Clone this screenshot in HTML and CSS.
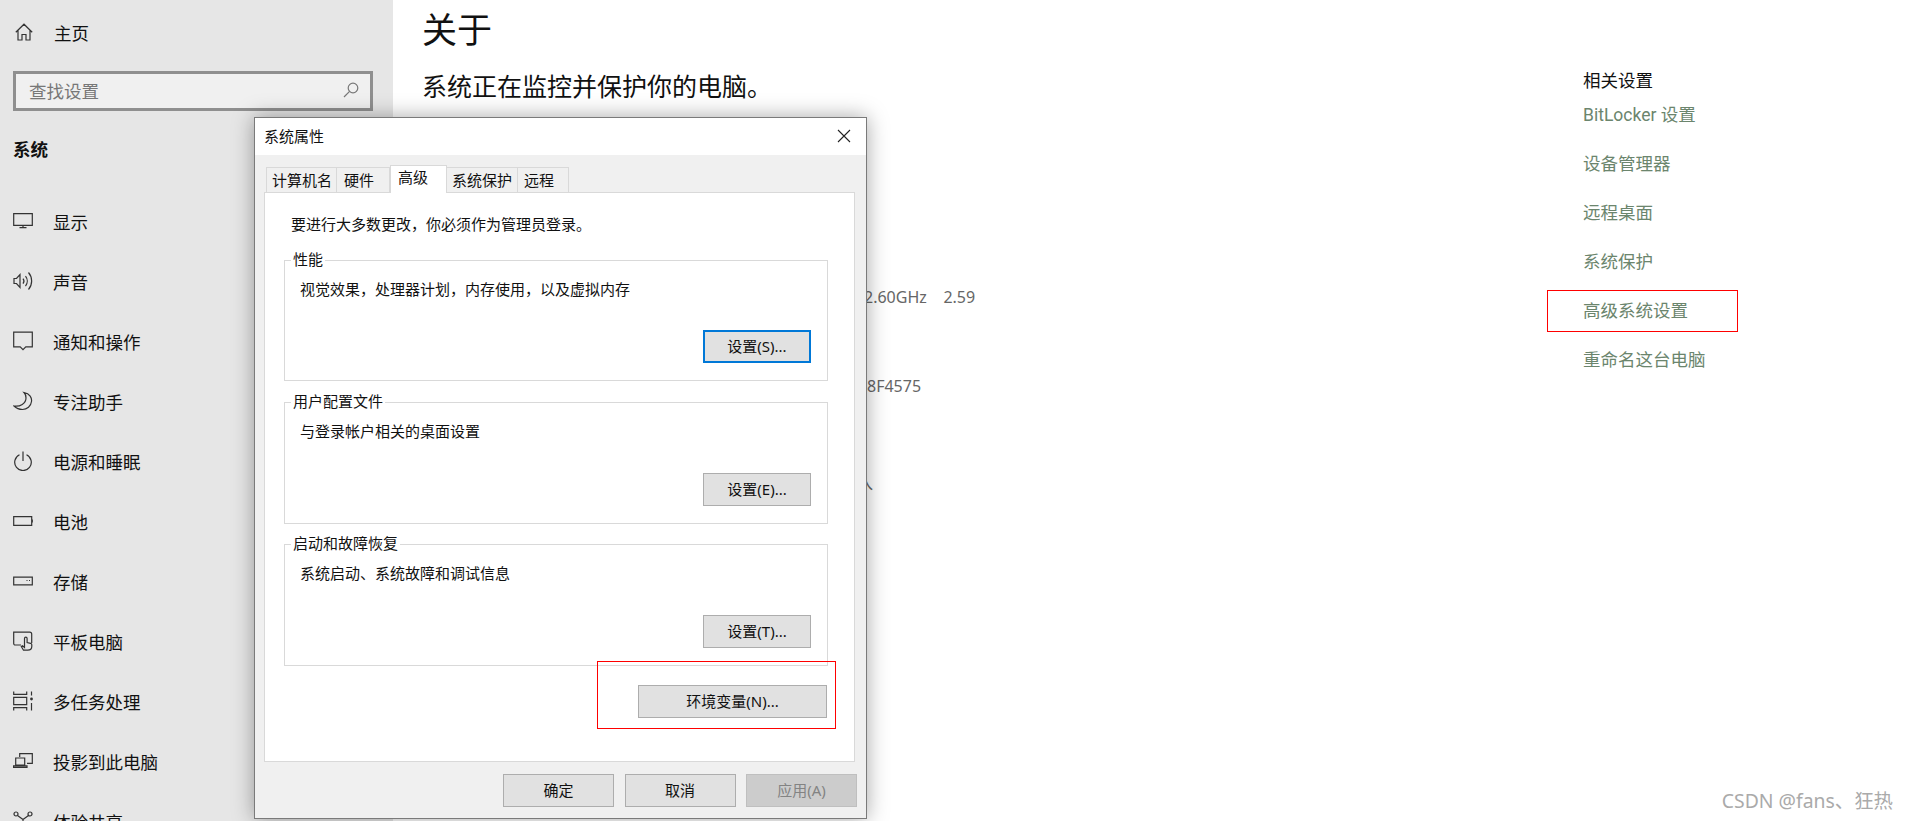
FILE: index.html
```html
<!DOCTYPE html>
<html lang="zh-CN">
<head>
    <meta charset="UTF-8">
    <title>关于</title>
    <link rel="stylesheet" href="styles.css">
</head>
<body>
    <div class="sidebar">
        <div class="home-row">
            <svg class="home-icon" viewBox="0 0 18 18"><path d="M.8 9.2 9 1.2l8.2 8M3 7.2V17h4v-5.5h4V17h4V7.2"/></svg>
            <span>主页</span>
        </div>
        <div class="search">
            <span>查找设置</span>
            <svg class="search-icon" viewBox="0 0 16 16"><circle cx="10" cy="6" r="4.8"/><path d="M6.6 9.4 1 15"/></svg>
        </div>
        <div class="sidebar-title">系统</div>
        <ul class="nav">
            <li><svg viewBox="0 0 20 20"><path d="M.7 2.700h18.600v11.600H.7zM10 14.300v2.400M6.500 16.700h7"/></svg>显示</li>
            <li><svg viewBox="0 0 20 20"><path d="M1 7.500h2.500l3.500-4v13l-3.500-4H1zM10 7.500a4 4 0 0 1 0 5M12.500 5a8 8 0 0 1 0 10M15.500 1.500a13 13 0 0 1 0 17"/></svg>声音</li>
            <li><svg viewBox="0 0 20 20"><path d="M.7 1.200h18.600v14.600h-6.500L10 18.600l-2.800-2.800H.7z"/></svg>通知和操作</li>
            <li><svg viewBox="0 0 20 20"><path d="M11 1.500c6 1 8 5.500 7.500 9-.5 4.500-4.500 8-9 8-3.500 0-6.500-1.500-8.500-3.500 6 1 12-2.500 12-8 0-2-.5-4-2-5.500z"/></svg>专注助手</li>
            <li><svg viewBox="0 0 20 20"><path d="M6.500 3.700a8.300 8.300 0 1 0 7 0M10 .5v9.500"/></svg>电源和睡眠</li>
            <li><svg viewBox="0 0 20 20"><path d="M.7 5.700h18v8.600H.7zM19.300 8.500v3"/></svg>电池</li>
            <li><svg viewBox="0 0 20 20"><path d="M.7 6.200h18.600v7.600H.7zM13.500 9.500h1M16 9.500h1"/></svg>存储</li>
            <li><svg viewBox="0 0 20 20"><path d="M8 14H2.200A1.500 1.500 0 0 1 .7 12.500V1.200h16a2 2 0 0 1 2 2V12M10.500 19.200 8.300 15.500l1.200-.8 2 1.800V7.500a1.300 1.300 0 0 1 2.600 0v4l3.500.8c.8.2 1.200.8 1.200 1.500v1.500c0 2.500-1.500 3.900-4 3.900z"/></svg>平板电脑</li>
            <li><svg viewBox="0 0 20 20"><path d="M.7.500v2.800h13V.500M.7 6.300h13v7.400H.7zM.7 19.500v-2.800h13v2.800M18.500.500v4M18.500 12v7.500"/><circle class="dot" cx="18.500" cy="8" r="1.400"/></svg>多任务处理</li>
            <li><svg viewBox="0 0 20 20"><path d="M6.700 6V2.700h12.600v9.600H14M2.700 7h9v7h-9zM.5 14.800v1.500h13.500v-1.500z"/></svg>投影到此电脑</li>
            <li><svg viewBox="0 0 20 20"><circle cx="3" cy="3" r="2"/><circle cx="17" cy="3" r="2"/><path d="m4.500 4.500 5.500 4 5.500-4M10 8.500V19"/></svg>体验共享</li>
        </ul>
    </div>

    <div class="main">
        <h1>关于</h1>
        <p class="status">系统正在监控并保护你的电脑。</p>
        <p class="spec spec-cpu">2.60GHz&nbsp;&nbsp;&nbsp;&nbsp;2.59</p>
        <p class="spec spec-id">8F4575</p>
        <p class="spec spec-pen">入</p>
        <p class="cut-off">系统规格复制重命名这台电脑</p>
    </div>

    <div class="related">
        <h2>相关设置</h2>
        <a>BitLocker 设置</a>
        <a>设备管理器</a>
        <a>远程桌面</a>
        <a>系统保护</a>
        <a>高级系统设置</a>
        <a>重命名这台电脑</a>
    </div>

    <div class="dialog">
        <div class="dialog-title">
            <span>系统属性</span>
            <svg class="close" viewBox="0 0 14 14"><path d="m1 1 12 12M13 1 1 13"/></svg>
        </div>
        <div class="dialog-body">
            <div class="tabs">
                <div class="tab tab-name">计算机名</div>
                <div class="tab tab-hw">硬件</div>
                <div class="tab tab-active">高级</div>
                <div class="tab tab-protect">系统保护</div>
                <div class="tab tab-remote">远程</div>
            </div>
            <div class="panel">
                <p class="intro">要进行大多数更改，你必须作为管理员登录。</p>
                <div class="group">
                    <span class="group-title">性能</span>
                    <p>视觉效果，处理器计划，内存使用，以及虚拟内存</p>
                    <button class="btn btn-group btn-focus">设置(S)...</button>
                </div>
                <div class="group">
                    <span class="group-title">用户配置文件</span>
                    <p>与登录帐户相关的桌面设置</p>
                    <button class="btn btn-group">设置(E)...</button>
                </div>
                <div class="group">
                    <span class="group-title">启动和故障恢复</span>
                    <p>系统启动、系统故障和调试信息</p>
                    <button class="btn btn-group">设置(T)...</button>
                </div>
                <button class="btn btn-env">环境变量(N)...</button>
            </div>
            <div class="actions">
                <button class="btn btn-action">确定</button>
                <button class="btn btn-action">取消</button>
                <button class="btn btn-action btn-disabled">应用(A)</button>
            </div>
        </div>
    </div>

    <div class="mark mark-env"></div>
    <div class="mark mark-link"></div>
    <div class="watermark">CSDN @fans、狂热</div>
</body>
</html>
```

FILE: styles.css
```css
* {
    box-sizing: border-box;
}
html, body {
    height: 821px;
    overflow: hidden;
}
body {
    margin: 0;
    display: flex;
    position: relative;
    background-color: #fff;
    color: #111;
    font-family: "Noto Sans", "Noto Sans CJK SC", sans-serif;
}
p, h1, h2, ul {
    margin: 0;
    padding: 0;
    font-weight: normal;
}

/* left column */
.sidebar {
    width: 393px;
    flex-shrink: 0;
    padding-top: 14px;
    background-color: #e6e6e6;
    font-size: 17.5px;
}
.sidebar svg {
    fill: none;
    stroke: #333;
    stroke-width: 1.2;
    flex-shrink: 0;
}
.home-row {
    display: flex;
    align-items: center;
    gap: 21px;
    height: 36px;
    padding-left: 15px;
}
.home-icon {
    width: 18px;
    height: 18px;
}
.search {
    display: flex;
    align-items: center;
    justify-content: space-between;
    width: 360px;
    height: 40px;
    margin: 21px 0 0 13px;
    padding: 0 11px 2px 13px;
    border: 3px solid #8f8f8f;
    background-color: #f0f0f0;
    color: #777;
}
.sidebar .search-icon {
    width: 16px;
    height: 16px;
    stroke: #777;
}
.sidebar-title {
    height: 30px;
    margin: 23px 0 27px 13px;
    font-size: 17.5px;
    font-weight: 700;
    line-height: 30px;
}
.nav {
    list-style: none;
    padding-left: 13px;
}
.nav li {
    display: flex;
    align-items: center;
    gap: 20px;
    height: 60px;
}
.nav svg {
    width: 20px;
    height: 20px;
}
.sidebar .dot {
    fill: #333;
    stroke: none;
}

/* middle column */
.main {
    width: 1123px;
    flex-shrink: 0;
    padding: 10px 0 0 29px;
}
.main h1 {
    font-size: 35px;
    line-height: 40px;
}
.status {
    margin-top: 18px;
    font-size: 25px;
    line-height: 36px;
}
.spec {
    color: #666;
    font-size: 16px;
    line-height: 22px;
    white-space: nowrap;
}
.spec-cpu {
    margin: 182px 0 0 442px;
}
.spec-id {
    margin: 67px 0 0 445px;
}
.spec-pen {
    margin: 75px 0 0 435px;
}
.cut-off {
    margin-top: 324px;
    font-size: 16px;
    line-height: 22px;
}

/* right column */
.related {
    display: flex;
    flex-direction: column;
    width: 326px;
    padding: 70px 0 0 67px;
}
.related h2 {
    font-size: 17.5px;
    line-height: 21px;
}
.related a {
    color: #6b856d;
    font-family: Roboto, "Noto Sans CJK SC", sans-serif;
    font-size: 17.5px;
    line-height: 49px;
}

/* system properties window */
.dialog {
    position: absolute;
    left: 254px;
    top: 117px;
    width: 613px;
    height: 702px;
    display: flex;
    flex-direction: column;
    border: 1px solid #7a7a7a;
    background-color: #f0f0f0;
    box-shadow: 0 0 20px rgba(0, 0, 0, 0.35);
    font-size: 15px;
    line-height: 20px;
}
.dialog-title {
    display: flex;
    align-items: center;
    justify-content: space-between;
    height: 37px;
    padding: 0 15px 2px 9px;
    background-color: #fff;
}
.close {
    width: 14px;
    height: 14px;
    fill: none;
    stroke: #222;
    stroke-width: 1.1;
}
.dialog-body {
    padding: 10px 9px 0;
}
.tabs {
    display: flex;
    height: 28px;
    padding-left: 2px;
    align-items: flex-start;
}
.tab {
    height: 26px;
    margin-top: 2px;
    padding-left: 6px;
    border: 1px solid #d9d9d9;
    border-bottom: 0;
    border-left: 0;
    line-height: 24px;
    white-space: nowrap;
}
.tab-name {
    width: 71px;
    padding-left: 5px;
    border-left: 1px solid #d9d9d9;
}
.tab-hw {
    width: 53px;
    padding-left: 7px;
}
.tab-active {
    width: 57px;
    height: 28px;
    margin-top: 0;
    padding-left: 7px;
    border-left: 1px solid #d9d9d9;
    background-color: #fff;
    position: relative;
    z-index: 1;
    line-height: 22px;
}
.tab-protect {
    width: 71px;
    padding-left: 5px;
}
.tab-remote {
    width: 51px;
}
.panel {
    width: 591px;
    height: 570px;
    margin-top: -1px;
    padding: 21px 26px 0 19px;
    border: 1px solid #d9d9d9;
    background-color: #fff;
}
.intro {
    margin-bottom: 26px;
    padding-left: 7px;
}
.group {
    position: relative;
    display: flex;
    flex-direction: column;
    height: 121px;
    margin-bottom: 21px;
    padding: 18px 16px 0 15px;
    border: 1px solid #d9d9d9;
}
.group + .group {
    height: 122px;
    margin-bottom: 20px;
}
.group-title {
    position: absolute;
    left: 6px;
    top: -12px;
    padding: 0 2px;
    background-color: #fff;
}
.btn {
    height: 33px;
    padding: 0 0 2px;
    border: 1px solid #adadad;
    background-color: #e1e1e1;
    color: #111;
    font: inherit;
}
.btn-group {
    align-self: flex-end;
    width: 108px;
    margin-top: 31px;
}
.group + .group .btn-group {
    margin-top: 32px;
}
.btn-focus {
    border: 2px solid #0078d7;
}
.btn-env {
    display: block;
    width: 189px;
    margin: -1px 0 0 354px;
}
.actions {
    display: flex;
    justify-content: flex-end;
    gap: 10.5px;
    margin-top: 12px;
}
.btn-action {
    width: 111px;
}
.btn-disabled {
    border-color: #bfbfbf;
    background-color: #ccc;
    color: #838383;
}

/* red annotation boxes */
.mark {
    position: absolute;
    border: 1px solid #f00;
}
.mark-env {
    left: 597px;
    top: 661px;
    width: 239px;
    height: 68px;
}
.mark-link {
    left: 1547px;
    top: 290px;
    width: 191px;
    height: 42px;
}
.watermark {
    position: absolute;
    right: 16px;
    top: 788px;
    color: #aaa;
    font-size: 19.4px;
    line-height: 26px;
}
```
